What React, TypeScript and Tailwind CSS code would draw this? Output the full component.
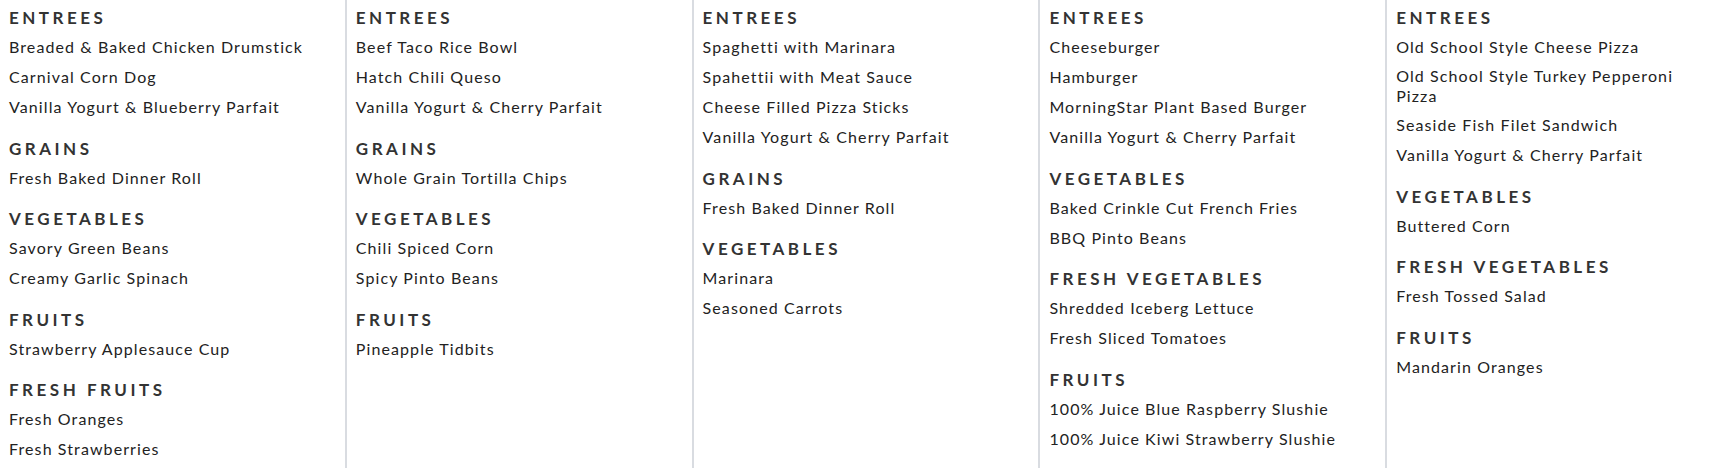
import React from 'react';

type Section = { title: string; items: string[] };

const days: Section[][] = [
  [
    { title: 'Entrees', items: ['Breaded & Baked Chicken Drumstick', 'Carnival Corn Dog', 'Vanilla Yogurt & Blueberry Parfait'] },
    { title: 'Grains', items: ['Fresh Baked Dinner Roll'] },
    { title: 'Vegetables', items: ['Savory Green Beans', 'Creamy Garlic Spinach'] },
    { title: 'Fruits', items: ['Strawberry Applesauce Cup'] },
    { title: 'Fresh Fruits', items: ['Fresh Oranges', 'Fresh Strawberries'] },
  ],
  [
    { title: 'Entrees', items: ['Beef Taco Rice Bowl', 'Hatch Chili Queso', 'Vanilla Yogurt & Cherry Parfait'] },
    { title: 'Grains', items: ['Whole Grain Tortilla Chips'] },
    { title: 'Vegetables', items: ['Chili Spiced Corn', 'Spicy Pinto Beans'] },
    { title: 'Fruits', items: ['Pineapple Tidbits'] },
  ],
  [
    {
      title: 'Entrees',
      items: ['Spaghetti with Marinara', 'Spahettii with Meat Sauce', 'Cheese Filled Pizza Sticks', 'Vanilla Yogurt & Cherry Parfait'],
    },
    { title: 'Grains', items: ['Fresh Baked Dinner Roll'] },
    { title: 'Vegetables', items: ['Marinara', 'Seasoned Carrots'] },
  ],
  [
    { title: 'Entrees', items: ['Cheeseburger', 'Hamburger', 'MorningStar Plant Based Burger', 'Vanilla Yogurt & Cherry Parfait'] },
    { title: 'Vegetables', items: ['Baked Crinkle Cut French Fries', 'BBQ Pinto Beans'] },
    { title: 'Fresh Vegetables', items: ['Shredded Iceberg Lettuce', 'Fresh Sliced Tomatoes'] },
    { title: 'Fruits', items: ['100% Juice Blue Raspberry Slushie', '100% Juice Kiwi Strawberry Slushie'] },
  ],
  [
    {
      title: 'Entrees',
      items: [
        'Old School Style Cheese Pizza',
        'Old School Style Turkey Pepperoni Pizza',
        'Seaside Fish Filet Sandwich',
        'Vanilla Yogurt & Cherry Parfait',
      ],
    },
    { title: 'Vegetables', items: ['Buttered Corn'] },
    { title: 'Fresh Vegetables', items: ['Fresh Tossed Salad'] },
    { title: 'Fruits', items: ['Mandarin Oranges'] },
  ],
];

function MenuSection({ section }: { section: Section }) {
  return (
    <div className="mt-[14.5px] first:mt-0">
      <h3 className="mb-[2px] text-[17px] leading-[24px] font-bold uppercase tracking-[3.5px] text-[#333333]">
        {section.title}
      </h3>
      <ul>
        {section.items.map((item) => (
          <li
            key={item}
            className="flex min-h-[30px] items-center py-[4px] text-[16px] leading-[20px] tracking-[1.1px] text-[#222222]"
          >
            {item}
          </li>
        ))}
      </ul>
    </div>
  );
}

export default function App() {
  return (
    <div className="w-full overflow-hidden bg-white font-['Lato','Open_Sans',sans-serif]">
      <div className="-ml-[2px] grid w-[1734px] min-h-[468px] grid-cols-5">
        {days.map((sections, i) => (
          <div key={i} className="border-l-2 border-[#d9dce1] pl-[9px] pr-[24px] pt-[6px]">
            {sections.map((s) => (
              <MenuSection key={s.title} section={s} />
            ))}
          </div>
        ))}
      </div>
    </div>
  );
}
